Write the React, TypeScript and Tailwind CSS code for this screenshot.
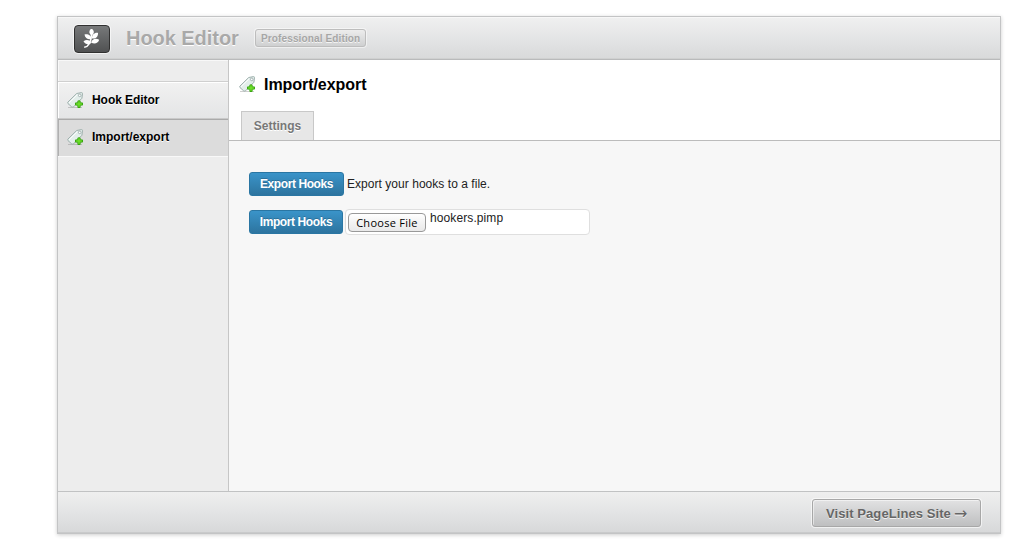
import React from "react";

function LeafIcon() {
  return (
    <svg width="18" height="20" viewBox="0 0 18 20" fill="#fff">
      <path d="M1.200 18.300C5 17.800 8 15 8.600 5" fill="none" stroke="#fff" strokeWidth="1.500" />
      <path d="M8.700 6.400C5.500 4.700 5.700 1.500 8.400 -0.600C11.300 1.300 11.800 4.400 8.700 6.400Z" />
      <path d="M8.500 10C5.200 11 1.900 9.100 1.500 5.500C5 4.700 8.400 6.400 8.500 10Z" />
      <path d="M9 9.400C8.700 5.800 11.200 3.500 15 3.900C15.200 7.500 12.800 10 9 9.400Z" />
      <path d="M8.200 14C5.500 16.400 2 15.200 0.500 12.200C3.400 9.900 7.100 10.700 8.200 14Z" />
      <path d="M8 13.500C9.400 9.800 12.500 8.900 16.200 10.700C14.900 14.400 11.500 15.600 8 13.500Z" />
    </svg>
  );
}

function TagIcon() {
  return (
    <svg width="16" height="16" viewBox="0 0 16 16" className="shrink-0">
      <path d="M1 15.500H15" stroke="#888" strokeOpacity=".4" />
      <path
        d="M9.700 1.500L14.500 .6Q15.500 .6 15.500 1.600L14.900 6.300L6.600 14.800Q5.600 15.500 4.500 14.700L1 11.600Q.2 10.800 1 10Z"
        fill="#e3eeeb"
        stroke="#9dafac"
      />
      <path d="M10.200 2.700L2 10.800" stroke="#fff" strokeWidth="1" />
      <circle cx="12.700" cy="3.400" r="1.300" fill="#fff" stroke="#9cacaa" strokeWidth=".9" />
      <path d="M10.900 8.900h2.200v2h2.400v2.200h-2.400v2.400h-2.200v-2.400h-2.400v-2.200h2.400z" fill="#62d51d" stroke="#3aa514" />
      <path d="M12 9.500v5M9.500 12h5" stroke="#6fe02c" />
    </svg>
  );
}

function BlueButton({ children, className }: { children: React.ReactNode; className: string }) {
  return (
    <button
      className={
        "h-6 shrink-0 whitespace-nowrap rounded-[3px] border border-[#2a76a3] bg-linear-to-b from-[#3a94c9] to-[#2d749f] text-center text-[12px] leading-[22px] font-bold text-white [text-shadow:0_-1px_0_rgba(0,0,0,.2)] " +
        className
      }
    >
      {children}
    </button>
  );
}

export default function App() {
  return (
    <div className="h-[554px] w-[1033px] overflow-hidden bg-white pt-4 pl-[57px] font-['Liberation_Sans',Arial,sans-serif] text-[12px] text-black">
      <div className="flex h-[518px] w-[944px] flex-col border border-[#c3c4c5] shadow-[0_1px_4px_rgba(0,0,0,.2)]">
        <header className="flex h-[43px] shrink-0 items-center border-b border-[#b9babb] bg-linear-to-b from-[#f0f0f0] via-[#e4e5e6] to-[#d8d9da] pl-4 shadow-[inset_0_1px_0_#f7f7f7,inset_0_-1px_0_#cfd0d0]">
          <div className="mt-0.5 flex h-[28px] w-[36px] items-center justify-center rounded-[4px] border border-[#303030] bg-linear-to-b from-[#77797a] to-[#505152] shadow-[0_0_0_1px_rgba(255,255,255,.6)]">
            <LeafIcon />
          </div>
          <h1 className="ml-4 w-[113px] whitespace-nowrap text-[20px] leading-6 font-bold tracking-[-.05px] text-[#a9a9a9] [text-shadow:0_1px_0_#fff]">
            Hook Editor
          </h1>
          <div className="ml-4 h-[18px] w-[111px] rounded-[3px] border border-[#bdbdbd] bg-linear-to-b from-[#ededed] to-[#cfd0d1] pl-[5px] text-[10px] leading-[17px] font-bold tracking-[.13px] whitespace-nowrap text-[#a6a6a6] shadow-[0_0_0_1px_rgba(255,255,255,.5)] [text-shadow:0_1px_0_#f5f5f5]">
            Professional Edition
          </div>
        </header>

        <div className="flex min-h-0 flex-1">
          <nav className="w-[171px] shrink-0 border-r border-[#c6c6c6] bg-[#ededed]">
            <div className="h-[22px] border-b border-[#cfcfcf] shadow-[inset_1px_1px_0_#f8f8f8]" />
            <a className="flex h-[37px] items-center gap-2 border-b border-[#c9c9c9] bg-linear-to-b from-[#f1f1f1] to-[#e4e5e6] pl-[9px] font-bold shadow-[inset_1px_1px_0_#fff] [text-shadow:0_1px_0_#fff]">
              <TagIcon />
              <span className="ml-px tracking-[-.06px]">Hook Editor</span>
            </a>
            <a className="flex h-[37px] items-center gap-2 border-t border-l border-[#aaa] border-l-[#b0b0b0] bg-[#dcdcdc] pb-0.5 pl-2 font-bold [text-shadow:0_1px_0_#fff]">
              <TagIcon />
              <span className="ml-px">Import/export</span>
            </a>
            <div className="h-px bg-[#f8f8f8]" />
          </nav>

          <main className="flex min-w-0 flex-1 flex-col bg-[#f7f7f7]">
            <div className="flex h-[81px] shrink-0 flex-col border-b border-[#bcbcbc] bg-white pl-[10px]">
              <div className="mt-4 flex h-[18px] items-center gap-[9px]">
                <div className="-mt-0.5">
                  <TagIcon />
                </div>
                <h2 className="text-[16px] leading-[18px] font-bold tracking-[-.05px]">Import/export</h2>
              </div>
              <div className="mt-[17px] ml-0.5 h-[29px] w-[73px] border border-b-0 border-[#c8c8c8] bg-[#e7e7e7] text-center leading-[29px] font-bold text-[#777] [text-shadow:0_1px_0_#fff]">
                Settings
              </div>
            </div>

            <div className="pt-[31px] pl-5">
              <div className="flex h-6 items-center text-[#222]">
                <BlueButton className="w-[95px] tracking-[-.4px]">Export Hooks</BlueButton>
                <span className="ml-[3px] tracking-[.04px]">Export your hooks to a file.</span>
              </div>
              <div className="mt-[13px] flex h-[26px] items-center">
                <BlueButton className="w-[94px] tracking-[-.4px]">Import Hooks</BlueButton>
                <div className="ml-0.5 flex h-[26px] w-[245px] rounded-[4px] border border-[#dfdfdf] bg-white text-[#222]">
                  <button className="mt-[3px] ml-0.5 h-[19px] w-[78px] rounded-[4px] border border-[#999] bg-linear-to-b from-white via-[#f3f3f3] to-[#e9e9e9] text-center font-['Open_Sans','Noto_Sans',sans-serif] text-[11px] leading-[18px] tracking-[.28px] whitespace-nowrap text-black">
                    Choose File
                  </button>
                  <span className="ml-1 leading-4 tracking-[.1px]">hookers.pimp</span>
                </div>
              </div>
            </div>
          </main>
        </div>

        <footer className="flex h-[42px] shrink-0 justify-end border-t border-[#c1c2c3] bg-linear-to-b from-[#efefef] via-[#e3e4e5] to-[#d7d8d9] pt-[7px] pr-[19px] shadow-[inset_0_-1px_0_#c9cacb]">
          <button className="flex h-7 w-[169px] rounded-[3px] border border-[#a7a7a7] bg-linear-to-b from-[#e2e2e3] to-[#bebfc0] pl-[13px] text-left text-[13px] leading-[27px] font-bold tracking-[.08px] whitespace-nowrap text-[#666] shadow-[0_0_0_1px_rgba(255,255,255,.6),inset_1px_1px_0_rgba(255,255,255,.5)] [text-shadow:0_1px_0_#f2f2f2]">
            Visit PageLines Site
            <span className="ml-[3px] font-['DejaVu_Sans',sans-serif] text-[16px] leading-[28px] font-normal">→</span>
          </button>
        </footer>
      </div>
    </div>
  );
}
